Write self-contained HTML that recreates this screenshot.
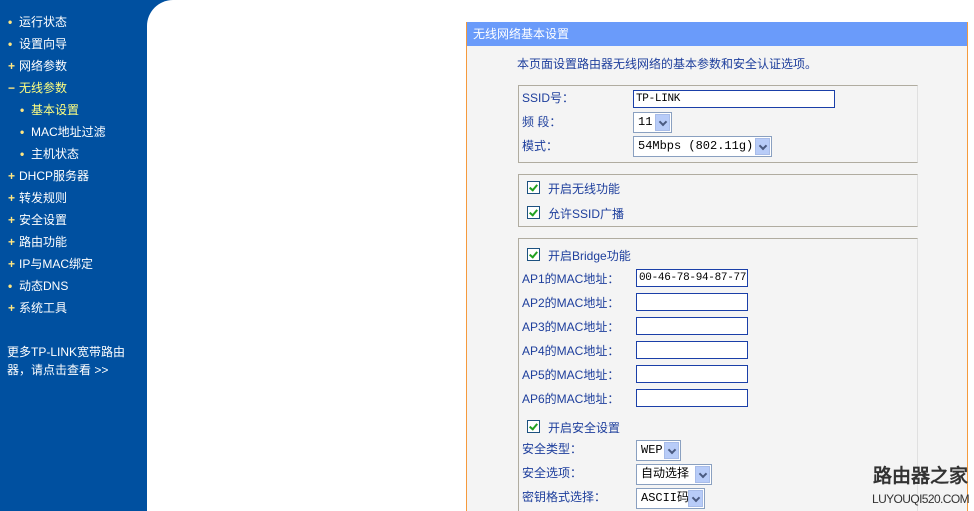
<!DOCTYPE html>
<html><head><meta charset="utf-8"><style>
*{margin:0;padding:0;box-sizing:border-box}
body{width:974px;height:511px;background:#fff;position:relative;overflow:hidden;font:12px "Liberation Sans","WenQuanYi Zen Hei","Noto Sans CJK SC",sans-serif}
.side{position:absolute;left:0;top:0;width:147px;height:511px;background:#0050a0;color:#fff}
.corner{position:absolute;left:147px;top:0;width:40px;height:40px;background:#0050a0}
.corner2{position:absolute;left:147px;top:0;width:60px;height:60px;background:#fff;border-top-left-radius:26px}
.it{position:absolute;left:8px;height:16px;line-height:16px;font-size:12px;white-space:nowrap}
.it b{display:inline-block;width:11px;color:#ffe680;font-weight:bold}
.sub{left:20px}
.y{color:#ffff80}
.panel{position:absolute;left:466px;top:22px;width:502px;height:489px;background:#f4f4f4;border-left:1px solid #f59a3c;border-right:1px solid #f59a3c;overflow:hidden}
.hd{position:absolute;left:0;top:0;width:500px;height:24px;background:#6a9bfa;color:#fff;font-size:12px;line-height:24px;padding-left:6px}
.t{position:absolute;color:#1d3e9c;font-size:12px;line-height:16px;white-space:nowrap}
.box{position:absolute;left:51px;width:400px;border:1px solid #b0aca0;border-right-color:#e0e0e0;border-bottom-color:#b0aca0}
.in{position:absolute;height:18px;background:#fff;border:1px solid #1a3fa8;font:11px "Liberation Mono","WenQuanYi Zen Hei",monospace;line-height:16px;padding-left:2px;color:#000;white-space:nowrap;overflow:hidden;letter-spacing:-0.3px}
.sel{position:absolute;height:21px;background:#fff;border:1px solid #8aa0c0;font:12px "Liberation Mono","WenQuanYi Zen Hei",monospace;line-height:19px;padding-left:4px;color:#000;white-space:nowrap}
.sel i{position:absolute;right:1px;top:1px;width:15px;height:17px;background:#b8ccf8;border:1px solid #a8bce8}
.sel i:after{content:"";position:absolute;left:4px;top:4px;width:4px;height:4px;border-right:2px solid #4a5a80;border-bottom:2px solid #4a5a80;transform:rotate(45deg)}
.cb{position:absolute;width:13px;height:13px;border:1px solid #1c5180;background:#fff}
.cb:after{content:"";position:absolute;left:3px;top:1px;width:3px;height:6px;border-right:2px solid #21a121;border-bottom:2px solid #21a121;transform:rotate(40deg)}
</style></head><body>
<div class="corner"></div><div class="corner2"></div>
<div class="side">
<div class="it" style="top:14px"><b>•</b>运行状态</div>
<div class="it" style="top:36px"><b>•</b>设置向导</div>
<div class="it" style="top:58px"><b>+</b>网络参数</div>
<div class="it y" style="top:80px"><b>−</b>无线参数</div>
<div class="it sub y" style="top:102px"><b>•</b>基本设置</div>
<div class="it sub" style="top:124px"><b>•</b>MAC地址过滤</div>
<div class="it sub" style="top:146px"><b>•</b>主机状态</div>
<div class="it" style="top:168px"><b>+</b>DHCP服务器</div>
<div class="it" style="top:190px"><b>+</b>转发规则</div>
<div class="it" style="top:212px"><b>+</b>安全设置</div>
<div class="it" style="top:234px"><b>+</b>路由功能</div>
<div class="it" style="top:256px"><b>+</b>IP与MAC绑定</div>
<div class="it" style="top:278px"><b>•</b>动态DNS</div>
<div class="it" style="top:300px"><b>+</b>系统工具</div>
<div class="it" style="top:344px;left:7px">更多TP-LINK宽带路由</div>
<div class="it" style="top:362px;left:7px">器，请点击查看 &gt;&gt;</div>
</div>
<div class="panel">
<div class="hd">无线网络基本设置</div>
<div class="t" style="left:50px;top:34px">本页面设置路由器无线网络的基本参数和安全认证选项。</div>
<div class="box" style="top:63px;height:78px"></div>
<div class="t" style="left:55px;top:68px">SSID号：</div>
<div class="in" style="left:166px;top:68px;width:202px">TP-LINK</div>
<div class="t" style="left:55px;top:92px">频 段：</div>
<div class="sel" style="left:166px;top:90px;width:39px">11<i></i></div>
<div class="t" style="left:55px;top:116px">模式：</div>
<div class="sel" style="left:166px;top:114px;width:139px">54Mbps (802.11g)<i></i></div>
<div class="box" style="top:152px;height:53px"></div>
<div class="cb" style="left:60px;top:159px"></div><div class="t" style="left:81px;top:159px">开启无线功能</div>
<div class="cb" style="left:60px;top:184px"></div><div class="t" style="left:81px;top:184px">允许SSID广播</div>
<div class="box" style="top:216px;height:290px"></div>
<div class="cb" style="left:60px;top:226px"></div><div class="t" style="left:81px;top:226px">开启Bridge功能</div>
<div class="t" style="left:55px;top:249px">AP1的MAC地址：</div><div class="in" style="left:169px;top:247px;width:112px">00-46-78-94-87-77</div>
<div class="t" style="left:55px;top:273px">AP2的MAC地址：</div><div class="in" style="left:169px;top:271px;width:112px"></div>
<div class="t" style="left:55px;top:297px">AP3的MAC地址：</div><div class="in" style="left:169px;top:295px;width:112px"></div>
<div class="t" style="left:55px;top:321px">AP4的MAC地址：</div><div class="in" style="left:169px;top:319px;width:112px"></div>
<div class="t" style="left:55px;top:345px">AP5的MAC地址：</div><div class="in" style="left:169px;top:343px;width:112px"></div>
<div class="t" style="left:55px;top:369px">AP6的MAC地址：</div><div class="in" style="left:169px;top:367px;width:112px"></div>
<div class="cb" style="left:60px;top:398px"></div><div class="t" style="left:81px;top:398px">开启安全设置</div>
<div class="t" style="left:55px;top:419px">安全类型：</div><div class="sel" style="left:169px;top:418px;width:45px">WEP<i></i></div>
<div class="t" style="left:55px;top:443px">安全选项：</div><div class="sel" style="left:169px;top:442px;width:76px">自动选择<i></i></div>
<div class="t" style="left:55px;top:467px">密钥格式选择：</div><div class="sel" style="left:169px;top:466px;width:69px">ASCII码<i></i></div>
</div>
<div style="position:absolute;left:873px;top:466px;font:bold 19px 'WenQuanYi Zen Hei',sans-serif;color:#333;white-space:nowrap;line-height:22px">路由器之家</div>
<div style="position:absolute;left:872px;top:492px;font:12px 'Liberation Sans',sans-serif;color:#333;letter-spacing:-0.6px;white-space:nowrap;line-height:14px">LUYOUQI520.COM</div>
</body></html>
